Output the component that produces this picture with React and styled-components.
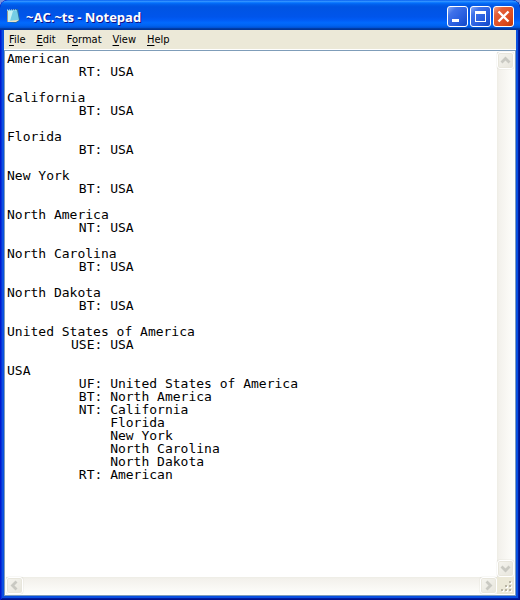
import React, {useState} from 'react';
import styled, {createGlobalStyle} from 'styled-components';

const GlobalStyle = createGlobalStyle`
    * {
        box-sizing:border-box;
    }
    body {
        margin:0;
        background-color:#7a93dc;
    }
`;
const Window = styled.main`
    display:flex;
    flex-direction:column;
    min-height:100vh;
    padding:0 4px 4px;
    border-radius:8px 8px 0 0;
    overflow:hidden;
    background-color:#0a50e0;
    box-shadow:inset 1px 0 #0019cf, inset -1px 0 #00138c, inset 0 -1px #00138c, inset 2px 0 #0831d9, inset -2px 0 #001ea0, inset 0 -2px #001ea0;
`;
const TitleBar = styled.header`
    display:flex;
    align-items:center;
    height:30px;
    margin:0 -4px;
    padding:2px 6px 0 5px;
    border-radius:8px 8px 0 0;
    background:linear-gradient(to bottom, #0058ee 0%, #3593ff 4%, #288eff 6%, #127dff 8%, #036ffc 10%, #0262ee 14%, #0057e5 20%, #0054e3 24%, #0055eb 56%, #005bf5 66%, #026afe 76%, #0062ef 86%, #0052d6 92%, #0040ab 94%, #003092 100%);
`;
const Title = styled.h1`
    flex:1;
    margin:0 0 0 5px;
    padding-top:1px;
    font-family:"Open Sans", "Liberation Sans", sans-serif;
    font-size:13px;
    line-height:20px;
    font-weight:bold;
    color:#fff;
    text-shadow:1px 1px #0f1089;
    white-space:nowrap;
`;
const Controls = styled.div`
    display:flex;
    gap:2px;
`;
const ControlButton = styled.button`
    width:21px;
    height:21px;
    padding:0;
    border:1px solid #fff;
    border-radius:3px;
    background:${props => props.$close
        ? 'linear-gradient(135deg, #f0a08a 0%, #e4603a 25%, #dc4a1e 70%, #c03a08 100%)'
        : 'linear-gradient(135deg, #86a8f6 0%, #3f72ea 25%, #2a5fe0 60%, #1248c8 100%)'};
    svg {
        display:block;
    }
`;
const MenuBar = styled.nav`
    display:flex;
    gap:1px;
    height:20px;
    padding-top:1px;
    background-color:#ece9d8;
    border-bottom:1px solid #fff;
`;
const MenuButton = styled.button`
    padding:0 5px;
    border:none;
    background:none;
    font-family:"DejaVu Sans Condensed", "DejaVu Sans", sans-serif;
    font-size:11px;
    line-height:18px;
    color:#000;
    &:hover {
        background-color:#316ac5;
        color:#fff;
    }
    u {
        text-underline-offset:2px;
    }
`;
const Editor = styled.section`
    flex:1;
    display:grid;
    grid-template-columns:1fr 17px;
    grid-template-rows:1fr 17px;
    border:1px solid #7f9db9;
    padding:1px;
    background-color:#fff;
`;
const TextArea = styled.textarea`
    display:block;
    width:100%;
    height:100%;
    margin:0;
    padding:0 1px;
    border:none;
    outline:none;
    resize:none;
    overflow:hidden;
    white-space:pre;
    background-color:#fff;
    color:#000;
    font-family:"DejaVu Sans Mono", monospace;
    font-size:13px;
    line-height:13px;
    tab-size:64px;
`;
const ScrollBar = styled.div`
    display:flex;
    flex-direction:${props => props.$vertical ? 'column' : 'row'};
    justify-content:space-between;
    background:linear-gradient(${props => props.$vertical ? 'to right' : 'to bottom'}, #eeede5 0, #f3f1ec 2px, #fefefb 100%);
`;
const ScrollButton = styled.button`
    width:17px;
    height:17px;
    padding:0;
    border:1px solid #fff;
    border-radius:3px;
    background:linear-gradient(135deg, #f5f4ef, #e7e5dc);
    box-shadow:inset 0 0 0 1px #e8e6dc, 0 0 1px #b5b3a2;
    svg {
        display:block;
    }
`;
const Grip = styled.div`
    background-color:#ece9d8;
    svg {
        display:block;
    }
`;

const menus = [
    ['', 'F', 'ile'],
    ['', 'E', 'dit'],
    ['F', 'o', 'rmat'],
    ['', 'V', 'iew'],
    ['', 'H', 'elp'],
];

const thesaurus = `American
\t RT: USA

California
\t BT: USA

Florida
\t BT: USA

New York
\t BT: USA

North America
\t NT: USA

North Carolina
\t BT: USA

North Dakota
\t BT: USA

United States of America
\tUSE: USA

USA
\t UF: United States of America
\t BT: North America
\t NT: California
\t     Florida
\t     New York
\t     North Carolina
\t     North Dakota
\t RT: American`;

const arrows = {
    up: 'M3.5 9.5 L7.5 5.5 L11.5 9.5',
    down: 'M3.5 5.5 L7.5 9.5 L11.5 5.5',
    left: 'M9.5 3.5 L5.5 7.5 L9.5 11.5',
    right: 'M5.5 3.5 L9.5 7.5 L5.5 11.5',
};

function NotepadIcon(){
    return (
        <svg width="16" height="16" viewBox="0 0 16 16" aria-hidden="true">
            <path d="M4 2 L13 1 L15 12 L11 15 L3 14 Z" fill="#2b6d9c"/>
            <path d="M2 2 L12 2 L14 12 L3 14 Z" fill="#75cde4"/>
            <path d="M2 3 L8 3 L5 13 L3 13 Z" fill="#c5f1f4"/>
            <path d="M3 13 L12 12 L14 12 L11 14 L3 14 Z" fill="#e8e2c8"/>
            <path d="M2 2 H12" stroke="#d8e4e6" strokeDasharray="1 1"/>
            <path d="M2.5 3 V14" stroke="#9a9c92"/>
        </svg>
    );
}

function ScrollArrow({direction, label}){
    return (
        <ScrollButton type="button" aria-label={label}>
            <svg width="15" height="15" viewBox="0 0 15 15">
                <path d={arrows[direction]} fill="none" stroke="#c9c9c2" strokeWidth="2.8"/>
            </svg>
        </ScrollButton>
    );
}

function App(){
    const [text, setText] = useState(thesaurus);
    return (
        <>
            <GlobalStyle/>
            <Window>
                <TitleBar>
                    <NotepadIcon/>
                    <Title>~AC.~ts - Notepad</Title>
                    <Controls>
                        <ControlButton type="button" aria-label="Minimize">
                            <svg width="19" height="19" viewBox="0 0 19 19">
                                <path d="M4 12 H11 V15 H4 Z" fill="#fff"/>
                            </svg>
                        </ControlButton>
                        <ControlButton type="button" aria-label="Maximize">
                            <svg width="19" height="19" viewBox="0 0 19 19">
                                <path d="M4 4 H15 V15 H4 Z M5 7 V14 H14 V7 Z" fill="#fff" fillRule="evenodd"/>
                            </svg>
                        </ControlButton>
                        <ControlButton type="button" aria-label="Close" $close>
                            <svg width="19" height="19" viewBox="0 0 19 19">
                                <path d="M4.5 4.5 L14.5 14.5 M14.5 4.5 L4.5 14.5" stroke="#fff" strokeWidth="2.4"/>
                            </svg>
                        </ControlButton>
                    </Controls>
                </TitleBar>

                <MenuBar>
                    {menus.map(([before, key, after]) => (
                        <MenuButton type="button" key={key}>{before}<u>{key}</u>{after}</MenuButton>
                    ))}
                </MenuBar>

                <Editor>
                    <TextArea
                        aria-label="Text"
                        wrap="off"
                        spellCheck="false"
                        value={text}
                        onChange={(e) => setText(e.target.value)}
                    />
                    <ScrollBar $vertical>
                        <ScrollArrow direction="up" label="Scroll up"/>
                        <ScrollArrow direction="down" label="Scroll down"/>
                    </ScrollBar>
                    <ScrollBar>
                        <ScrollArrow direction="left" label="Scroll left"/>
                        <ScrollArrow direction="right" label="Scroll right"/>
                    </ScrollBar>
                    <Grip>
                        <svg width="17" height="17" viewBox="0 0 17 17">
                            <path d="M13 5h2v2h-2z M9 9h2v2h-2z M13 9h2v2h-2z M5 13h2v2h-2z M9 13h2v2h-2z M13 13h2v2h-2z" fill="#fff"/>
                            <path d="M12 4h2v2h-2z M8 8h2v2h-2z M12 8h2v2h-2z M4 12h2v2h-2z M8 12h2v2h-2z M12 12h2v2h-2z" fill="#b8b4a3"/>
                        </svg>
                    </Grip>
                </Editor>
            </Window>
        </>
    );
}
export default App;
